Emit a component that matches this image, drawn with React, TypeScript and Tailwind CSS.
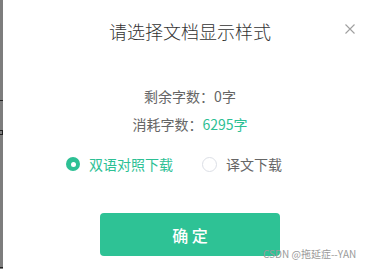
import React from "react";

export default function App() {
  const font = { fontFamily: '"Noto Sans CJK SC", "Noto Sans", sans-serif' };
  return (
    <div
      className="relative flex h-[269px] w-[369px] overflow-hidden bg-white"
      style={font}
    >
      {/* left backdrop strip */}
      <div className="relative h-full w-[3px] shrink-0 bg-[#7d7d7d]">
        <div className="absolute left-0 top-[100px] h-px w-[4px] bg-[#222]" />
        <div className="absolute left-0 top-[130px] h-[5px] w-[3px] border border-l-0 border-[#222]" />
        <div className="absolute left-0 top-[267px] h-px w-[4px] bg-[#222]" />
      </div>

      {/* dialog */}
      <div className="relative flex w-[374px] shrink-0 flex-col items-center bg-white pt-[19px]">
        <div className="h-[24px] text-[18px] font-light leading-[24px] text-[#333]">
          请选择文档显示样式
        </div>

        <button className="absolute left-[342px] top-[24px] flex h-[10px] w-[10px] items-center justify-center">
          <svg width="10" height="10" viewBox="0 0 10 10">
            <path d="M0.5 0.5 L9.5 9.5 M9.5 0.5 L0.5 9.5" stroke="#a0a0a0" strokeWidth="1.1" />
          </svg>
        </button>

        <div className="mt-[43px] h-[20px] text-[14px] leading-[20px] text-[#666]">
          剩余字数：0字
        </div>
        <div className="mt-[8px] h-[20px] text-[14px] leading-[20px] text-[#666]">
          消耗字数：<span className="text-[#2dc094]">6295字</span>
        </div>

        <div className="mt-[20px] flex h-[20px] w-full items-center pl-[63px] text-[14px] leading-[20px]">
          <div className="flex items-center">
            <span className="flex h-[14px] w-[14px] items-center justify-center rounded-full bg-[#2dc094]">
              <span className="h-[5px] w-[5px] rounded-full bg-white" />
            </span>
            <span className="ml-[9px] text-[#2dc094]">双语对照下载</span>
          </div>
          <div className="ml-[29px] flex items-center">
            <span className="h-[15px] w-[15px] rounded-full border border-[#dcdfe6] bg-white" />
            <span className="ml-[9px] text-[#666]">译文下载</span>
          </div>
        </div>

        <button className="mt-[39px] flex h-[43px] w-[180px] items-center justify-center rounded-[4px] bg-[#2ec295] text-[16px] font-medium text-white">
          确 定
        </button>
      </div>

      <div className="absolute left-[263px] top-[247px] text-[10px] leading-[13px] text-[#9a9a9a]">
        CSDN @拖延症--YAN
      </div>
    </div>
  );
}
